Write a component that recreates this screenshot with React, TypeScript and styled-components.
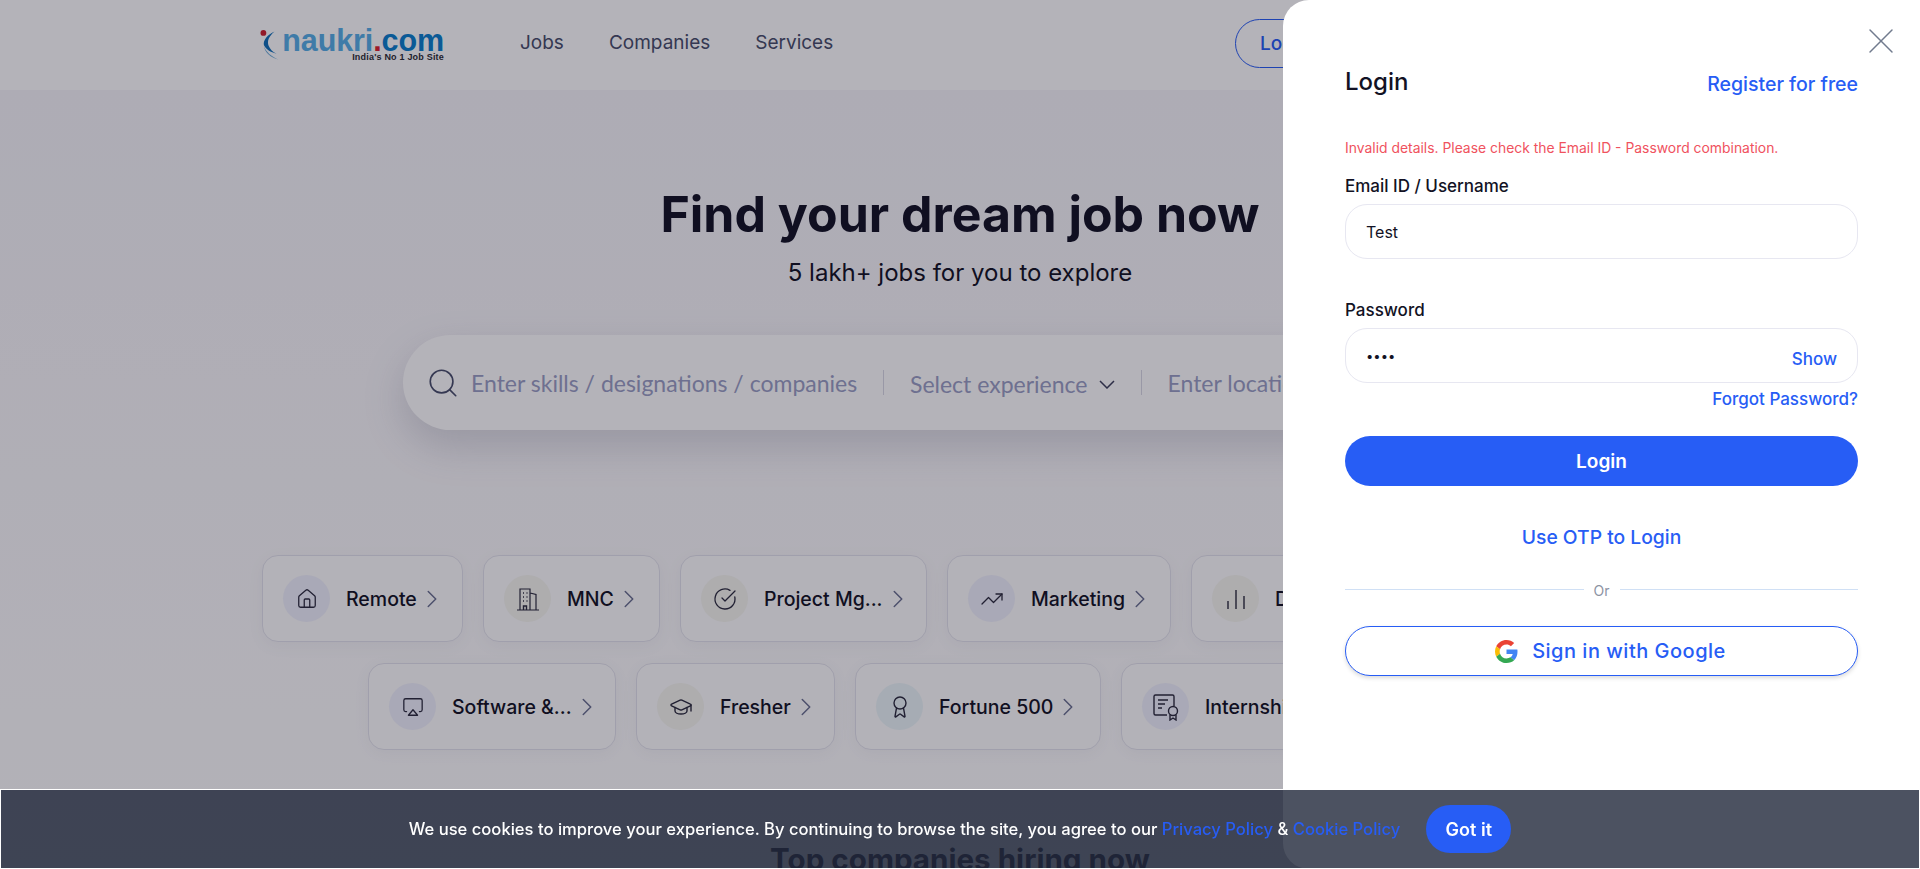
import styled, { createGlobalStyle } from "styled-components";
import { House, CircleCheckBig, TrendingUp, Airplay, GraduationCap, Award, ChevronRight, Search, X } from "lucide-react";

const GlobalStyle = createGlobalStyle`
    html, body {
        margin: 0;
        padding: 0;
        height: 869px;
        overflow: hidden;
        background: #fff;
        font-family: "Inter", "Liberation Sans", sans-serif;
        color: #121224;
    }
    * { box-sizing: border-box; }
`

const BuildingIcon = () => (
    <svg width="24" height="24" viewBox="0 0 24 24" fill="none" stroke="currentColor" strokeWidth="1.2">
        <path d="M1 23h22M4 23V2h10v21M14 6l6 1.5V23" />
        <path d="M7 6h1M10.5 6h1M7 10h1M10.5 10h1M7 14h1M10.5 14h1M7.5 23v-4h3v4" strokeWidth="1.4" />
    </svg>
);

const BarsIcon = () => (
    <svg width="22" height="24" viewBox="0 0 22 24" fill="none" stroke="currentColor" strokeWidth="1.4">
        <path d="M3 22v-8M11 22V3M19 22V9" />
    </svg>
);

const CertificateIcon = () => (
    <svg width="28" height="28" viewBox="0 0 28 28" fill="none" stroke="currentColor" strokeWidth="1.4">
        <path d="M15 22H3.500A1.500 1.500 0 0 1 2 20.500V3.500A1.500 1.500 0 0 1 3.500 2h17A1.500 1.500 0 0 1 22 3.500V13" />
        <path d="M6 7h10M6 11h7M6 15h4" />
        <circle cx="21" cy="18" r="4.500" />
        <path d="M18 22v5l3-2 3 2v-5" />
    </svg>
);

const GoogleIcon = () => (
    <svg width="23" height="23" viewBox="0 0 48 48">
        <path fill="#EA4335" d="M24 9.500c3.540 0 6.710 1.220 9.210 3.600l6.850-6.850C35.900 2.380 30.470 0 24 0 14.620 0 6.510 5.380 2.560 13.220l7.980 6.190C12.430 13.720 17.740 9.500 24 9.500z" />
        <path fill="#4285F4" d="M46.980 24.550c0-1.570-.15-3.090-.38-4.550H24v9.020h12.940c-.58 2.960-2.260 5.480-4.780 7.180l7.730 6c4.510-4.180 7.090-10.360 7.090-17.650z" />
        <path fill="#FBBC05" d="M10.530 28.590c-.48-1.450-.76-2.990-.76-4.590s.27-3.140.76-4.590l-7.980-6.190C.92 16.460 0 20.120 0 24c0 3.880.92 7.540 2.560 10.780l7.970-6.190z" />
        <path fill="#34A853" d="M24 48c6.480 0 11.930-2.130 15.890-5.810l-7.730-6c-2.150 1.450-4.920 2.300-8.160 2.300-6.260 0-11.570-4.220-13.470-9.910l-7.980 6.190C6.510 42.620 14.620 48 24 48z" />
    </svg>
);

const LogoSwoosh = () => (
    <svg width="24" height="32" viewBox="0 0 24 32">
        <circle cx="3.500" cy="3.500" r="3" fill="#d0202e" />
        <path d="M15 2C9 7 7 12 9 17c1.500 3.500 4 6 8 8-6-1.500-11-4.500-13-9C3 11 8 5 15 2z" fill="#0f6fb8" />
        <path d="M4 17c2 6 8 11 15 14C11 29 5 24 4 17z" fill="#6aaad8" />
    </svg>
);

const ChevronDownGlyph = () => (
    <svg width="16" height="9" viewBox="0 0 16 9" fill="none" stroke="#3c3f5a" strokeWidth="1.5">
        <path d="M1 1l7 7 7-7" />
    </svg>
);

const firstRow = [
    { label: "Remote", width: 201, tint: "#f0f1fc", icon: <House size={22} strokeWidth={1.4} /> },
    { label: "MNC", width: 177, tint: "#f6f6ef", icon: <BuildingIcon /> },
    { label: "Project Mg...", width: 247, tint: "#f6f6ef", icon: <CircleCheckBig size={24} strokeWidth={1.3} /> },
    { label: "Marketing", width: 224, tint: "#f0f1fc", icon: <TrendingUp size={24} strokeWidth={1.3} /> },
    { label: "Data Science", width: 244, tint: "#f6f6ef", icon: <BarsIcon /> },
    { label: "Analytics", width: 203, tint: "#f0f1fc", icon: <TrendingUp size={24} strokeWidth={1.3} /> },
];

const secondRow = [
    { label: "Software &...", width: 248, tint: "#f0f1fc", icon: <Airplay size={22} strokeWidth={1.4} /> },
    { label: "Fresher", width: 199, tint: "#f6f6ef", icon: <GraduationCap size={24} strokeWidth={1.4} /> },
    { label: "Fortune 500", width: 246, tint: "#ebf5f8", icon: <Award size={24} strokeWidth={1.4} /> },
    { label: "Internship", width: 208, tint: "#f0f1fc", icon: <CertificateIcon /> },
    { label: "Engineering", width: 203, tint: "#f6f6ef", icon: <House size={22} strokeWidth={1.4} /> },
];

const ChipRow = ({ items }: { items: typeof firstRow }) => (
    <ChipLine>
        {items.map((item) => (
            <Chip key={item.label} $width={item.width}>
                <ChipIcon $tint={item.tint}>{item.icon}</ChipIcon>
                <ChipLabel>{item.label}</ChipLabel>
                <ChipArrow><ChevronRight size={30} strokeWidth={1.2} /></ChipArrow>
            </Chip>
        ))}
    </ChipLine>
);

export default function App() {
    return (
        <>
            <GlobalStyle />
            <Page>
                <Header>
                    <Logo>
                        <LogoSwoosh />
                        <LogoText>
                            <LogoName>naukri<LogoDot>.</LogoDot><LogoCom>com</LogoCom></LogoName>
                            <LogoTag>India's No 1 Job Site</LogoTag>
                        </LogoText>
                    </Logo>
                    <Nav>
                        <NavLink>Jobs</NavLink>
                        <NavLink>Companies</NavLink>
                        <NavLink>Services</NavLink>
                    </Nav>
                    <HeaderLogin>Login</HeaderLogin>
                </Header>
                <Hero>
                    <Headline>Find your dream job now</Headline>
                    <SubLine>5 lakh+ jobs for you to explore</SubLine>
                    <SearchBar>
                        <SearchGlyph><Search size={34} strokeWidth={1.15} /></SearchGlyph>
                        <SearchInput $width={386} placeholder="Enter skills / designations / companies" />
                        <SearchDivider />
                        <ExperienceSelect>
                            Select experience
                            <ChevronDownGlyph />
                        </ExperienceSelect>
                        <SearchDivider />
                        <SearchInput $width={300} placeholder="Enter location" />
                    </SearchBar>
                    <Chips>
                        <ChipRow items={firstRow} />
                        <ChipRow items={secondRow} />
                    </Chips>
                    <SectionTitle>Top companies hiring now</SectionTitle>
                </Hero>
            </Page>
            <Overlay />
            <Panel>
                <CloseButton><X size={44} strokeWidth={0.8} /></CloseButton>
                <PanelHead>
                    <PanelTitle>Login</PanelTitle>
                    <RegisterLink $size={19.5}>Register for free</RegisterLink>
                </PanelHead>
                <ErrorText>Invalid details. Please check the Email ID - Password combination.</ErrorText>
                <FieldLabel>Email ID / Username</FieldLabel>
                <FieldBox>
                    <FieldInput readOnly value="Test" />
                </FieldBox>
                <FieldLabel $top={39}>Password</FieldLabel>
                <FieldBox>
                    <PasswordInput readOnly type="password" value="Test" />
                    <ShowLink>Show</ShowLink>
                </FieldBox>
                <ForgotRow>
                    <BlueLink $size={17}>Forgot Password?</BlueLink>
                </ForgotRow>
                <PrimaryButton>Login</PrimaryButton>
                <OtpRow>
                    <BlueLink $size={19.3}>Use OTP to Login</BlueLink>
                </OtpRow>
                <OrRow>
                    <OrLine />
                    <OrText>Or</OrText>
                    <OrLine />
                </OrRow>
                <GoogleButton>
                    <GoogleIcon />
                    Sign in with Google
                </GoogleButton>
            </Panel>
            <CookieBar>
                <CookieText>
                    We use cookies to improve your experience. By continuing to browse the site, you agree to our <CookieLink>Privacy Policy</CookieLink> & <CookieLink>Cookie Policy</CookieLink>
                </CookieText>
                <CookieButton>Got it</CookieButton>
            </CookieBar>
        </>
    );
}

const Page = styled.div`
    width: 1920px;
    height: 869px;
    overflow: hidden;
    background: #fff;
`

const Header = styled.header`
    display: flex;
    align-items: center;
    height: 90px;
    padding-left: 260px;
    background: #fff;
`

const Logo = styled.div`
    display: flex;
    align-items: flex-start;
    width: 184px;
    height: 32px;
`

const LogoText = styled.div`
    display: flex;
    flex-direction: column;
    align-items: flex-end;
    margin-left: -1px;
    font-family: "Liberation Sans", sans-serif;
    font-weight: 700;
`

const LogoName = styled.div`
    font-size: 30.500px;
    line-height: 23px;
    color: #56aee6;
    letter-spacing: -0.1px;
    white-space: nowrap;
`

const LogoDot = styled.span`
    color: #e0202e;
`

const LogoCom = styled.span`
    color: #097ecc;
`

const LogoTag = styled.div`
    font-size: 9px;
    line-height: 11px;
    color: #2b2b33;
    letter-spacing: 0.2px;
    white-space: nowrap;
`

const Nav = styled.nav`
    display: flex;
    gap: 45px;
    margin: 0 0 4px 76px;
`

const NavLink = styled.a`
    font-size: 19px;
    color: #474d6a;
    line-height: 24px;
`

const HeaderLogin = styled.button`
    margin: 0 0 4px 402px;
    width: 100px;
    height: 49px;
    background: #fff;
    border: 1px solid #275df5;
    border-radius: 25px;
    color: #275df5;
    font: 500 19px "Inter", sans-serif;
`

const Hero = styled.main`
    display: flex;
    flex-direction: column;
    align-items: center;
    height: 779px;
    padding-top: 94px;
    background: linear-gradient(180deg, #f6f5fa 0%, #faf9fb 50%, #fefefe 100%);
`

const Headline = styled.h1`
    margin: 0;
    font-size: 50px;
    line-height: 60px;
    font-weight: 700;
    color: #121224;
`

const SubLine = styled.p`
    margin: 14px 0 0;
    font-size: 24px;
    line-height: 30px;
    color: #121224;
`

const SearchBar = styled.div`
    display: flex;
    align-items: center;
    flex: none;
    width: 1114px;
    height: 95px;
    margin-top: 47px;
    padding-left: 23px;
    background: #fff;
    border-radius: 48px;
    box-shadow: 0 16px 40px rgba(90, 90, 120, 0.22);
`

const SearchGlyph = styled.span`
    display: flex;
    color: #474d6a;
    margin-right: 11px;
`

const SearchInput = styled.input<{ $width: number }>`
    width: ${(p) => p.$width}px;
    padding: 0;
    border: none;
    outline: none;
    background: transparent;
    font: 400 23px "Lato", sans-serif;
    &::placeholder { color: #9a9ec4; }
`

const SearchDivider = styled.span`
    width: 1px;
    height: 25px;
    margin: 0 26px;
    background: #d8d8e4;
`

const ExperienceSelect = styled.div`
    display: flex;
    align-items: center;
    gap: 11px;
    margin-top: 3px;
    font: 400 23px "Lato", sans-serif;
    color: #9a9ec4;
    white-space: nowrap;
`

const Chips = styled.div`
    display: flex;
    flex-direction: column;
    gap: 21px;
    margin-top: 125px;
`

const ChipLine = styled.div`
    display: flex;
    justify-content: center;
    gap: 20px;
`

const Chip = styled.div<{ $width: number }>`
    display: flex;
    align-items: center;
    flex: none;
    width: ${(p) => p.$width}px;
    height: 87px;
    padding-left: 20px;
    background: #fefefe;
    border: 1px solid #e3e3ec;
    border-radius: 16px;
    box-shadow: 0 4px 16px rgba(90, 90, 120, 0.06);
`

const ChipIcon = styled.span<{ $tint: string }>`
    display: flex;
    align-items: center;
    justify-content: center;
    flex: none;
    width: 47px;
    height: 47px;
    border-radius: 50%;
    background: ${(p) => p.$tint};
    color: #2b2b3d;
`

const ChipLabel = styled.span`
    margin-left: 16px;
    font-size: 19.500px;
    font-weight: 500;
    color: #121224;
    white-space: nowrap;
`

const ChipArrow = styled.span`
    display: flex;
    color: #6a7090;
`

const SectionTitle = styled.h2`
    margin: 89px 0 0;
    font-size: 29.600px;
    line-height: 40px;
    font-weight: 700;
    color: #121224;
`

const Overlay = styled.div`
    position: fixed;
    inset: 0;
    background: rgba(12, 9, 30, 0.31);
`

const Panel = styled.aside`
    position: fixed;
    top: 0;
    right: 0;
    bottom: 0;
    width: 637px;
    padding: 0 62px;
    background: #fff;
    border-radius: 26px 0 0 26px;
`

const CloseButton = styled.span`
    position: absolute;
    top: 19px;
    right: 17px;
    display: flex;
    color: #717b8e;
`

const PanelHead = styled.div`
    display: flex;
    align-items: center;
    justify-content: space-between;
    padding-top: 66px;
    height: 100px;
`

const PanelTitle = styled.h3`
    margin: -2px 0 0;
    font-size: 24px;
    line-height: 30px;
    font-weight: 500;
    color: #121224;
`

const BlueLink = styled.a<{ $size: number }>`
    font-size: ${(p) => p.$size}px;
    font-weight: 500;
    color: #275df5;
    white-space: nowrap;
`

const RegisterLink = styled(BlueLink)`
    margin-top: 2px;
`

const ErrorText = styled.p`
    margin: 38px 0 0;
    font-size: 13.900px;
    line-height: 20px;
    color: #f0525e;
`

const FieldLabel = styled.label<{ $top?: number }>`
    display: block;
    margin-top: ${(p) => p.$top ?? 16}px;
    font-size: 17px;
    line-height: 24px;
    font-weight: 500;
    color: #121224;
`

const FieldBox = styled.div`
    display: flex;
    align-items: center;
    height: 55px;
    margin-top: 6px;
    padding: 0 20px;
    border: 1px solid #e7e7f1;
    border-radius: 22px;
`

const FieldInput = styled.input`
    flex: 1;
    min-width: 0;
    padding: 0;
    border: none;
    outline: none;
    font: 400 16px "Inter", sans-serif;
    color: #121224;
`

const PasswordInput = styled(FieldInput)`
    font-size: 13px;
`

const ShowLink = styled.a`
    margin-top: 6px;
    font-size: 17px;
    font-weight: 500;
    color: #275df5;
`

const ForgotRow = styled.div`
    display: flex;
    justify-content: flex-end;
    height: 30px;
    padding-top: 6px;
`

const PrimaryButton = styled.button`
    display: block;
    width: 100%;
    height: 50px;
    margin-top: 23px;
    border: none;
    border-radius: 25px;
    background: #275df5;
    color: #fff;
    font: 600 19px "Inter", sans-serif;
`

const OtpRow = styled.div`
    display: flex;
    justify-content: center;
    margin-top: 39px;
    line-height: 24px;
`

const OrRow = styled.div`
    display: flex;
    align-items: center;
    gap: 10px;
    margin-top: 29px;
`

const OrLine = styled.span`
    flex: 1;
    height: 1px;
    background: #d0e0f5;
`

const OrText = styled.span`
    margin-top: 4px;
    font-size: 14px;
    line-height: 18px;
    color: #8c93a3;
`

const GoogleButton = styled.button`
    display: flex;
    align-items: center;
    justify-content: center;
    gap: 14px;
    width: 100%;
    height: 50px;
    margin-top: 26px;
    padding-left: 24px;
    background: #fff;
    border: 1.5px solid #275df5;
    border-radius: 25px;
    box-shadow: 0 2px 4px rgba(0, 0, 0, 0.15);
    color: #275df5;
    font: 500 20px "Inter", sans-serif;
    letter-spacing: 0.5px;
`

const CookieBar = styled.div`
    position: fixed;
    left: 0;
    right: 0;
    bottom: 0;
    height: 80px;
    display: flex;
    align-items: center;
    justify-content: center;
    gap: 26px;
    background: rgba(34, 42, 60, 0.81);
    border: 1px solid #fff;
`

const CookieText = styled.p`
    margin: 0;
    font-size: 16.600px;
    font-weight: 500;
    color: #fff;
    white-space: nowrap;
`

const CookieLink = styled.a`
    color: #275df5;
`

const CookieButton = styled.button`
    width: 85px;
    height: 48px;
    border: none;
    border-radius: 24px;
    background: #275df5;
    color: #fff;
    font: 600 18px "Inter", sans-serif;
`
